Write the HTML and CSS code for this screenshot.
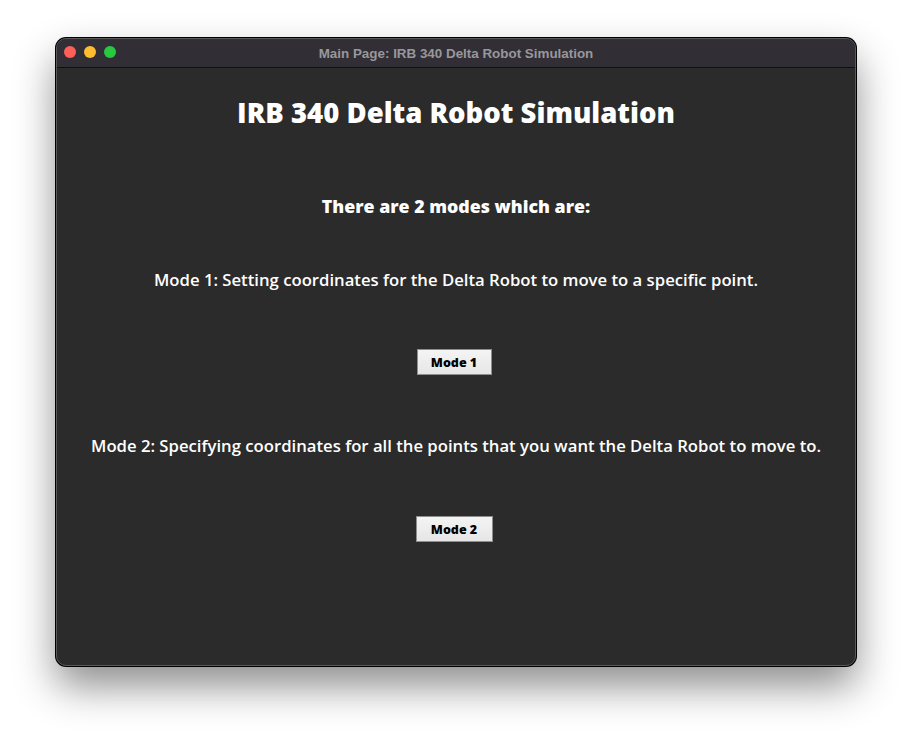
FILE: index.html
```html
<!DOCTYPE html>
<html>
<head>
<meta charset="utf-8">
<link rel="stylesheet" href="styles.css">
</head>
<body>
<div class="desktop">
  <div class="window">
    <div class="titlebar">
      <div class="lights">
        <span class="light red"></span>
        <span class="light yellow"></span>
        <span class="light green"></span>
      </div>
      <div class="wtitle">Main Page: IRB 340 Delta Robot Simulation</div>
    </div>
    <div class="content">
      <h1 class="heading">IRB 340 Delta Robot Simulation</h1>
      <h2 class="sub">There are 2 modes which are:</h2>
      <p class="desc d1">Mode 1: Setting coordinates for the Delta Robot to move to a specific point.</p>
      <button class="btn b1">Mode 1</button>
      <p class="desc d2">Mode 2: Specifying coordinates for all the points that you want the Delta Robot to move to.</p>
      <button class="btn b2">Mode 2</button>
    </div>
  </div>
</div>
</body>
</html>
```
FILE: styles.css
```css
html, body {
  margin: 0;
  padding: 0;
  background: #ffffff;
  width: 912px;
  height: 740px;
  overflow: hidden;
}
.desktop {
  padding: 38px 0 0 56px;
}
.window {
  width: 800px;
  height: 628px;
  box-sizing: border-box;
  border-radius: 10px;
  overflow: hidden;
  background: #2b2b2b;
  border: 1px solid #5a5a5a;
  box-shadow: 0 0 0 1px #000, 0 20px 40px rgba(0,0,0,0.45);
  display: flex;
  flex-direction: column;
}
.titlebar {
  height: 28px;
  flex: none;
  background: #312f35;
  border-bottom: 1px solid #101010;
  position: relative;
  display: flex;
  align-items: center;
  justify-content: center;
}
.lights {
  position: absolute;
  left: 7px;
  top: 7px;
  display: flex;
  gap: 8px;
}
.light {
  width: 12px;
  height: 12px;
  border-radius: 50%;
  display: block;
}
.red { background: #fe5f57; }
.yellow { background: #febc2e; }
.green { background: #28c840; }
.wtitle {
  font-family: "Liberation Sans", Arial, sans-serif;
  font-weight: bold;
  font-size: 13.4px;
  color: #99979c;
  margin-left: 0;
}
.content {
  flex: 1;
  display: flex;
  flex-direction: column;
  align-items: center;
  font-family: "Open Sans", sans-serif;
  color: #ffffff;
}
.heading {
  margin: 27px 0 0;
  font-size: 27.5px;
  font-weight: 800;
  line-height: 36px;
}
.sub {
  margin: 63px 0 0;
  font-size: 17.8px;
  font-weight: 800;
  line-height: 24px;
}
.desc {
  margin: 0;
  font-size: 16.7px;
  font-weight: 600;
  line-height: 24px;
}
.d1 { margin-top: 50px; }
.d2 { margin-top: 59px; }
.btn {
  font-family: "Open Sans", sans-serif;
  font-weight: 800;
  font-size: 12.5px;
  color: #000;
  background: linear-gradient(#f4f4f4, #e6e6e6);
  border: 1px solid #8e8e8e;
  height: 26px;
  padding: 0;
  border-radius: 0;
  margin-right: 4px;
}
.b1 { width: 75px; margin-top: 57px; }
.b2 { width: 77px; margin-top: 58px; }
```
